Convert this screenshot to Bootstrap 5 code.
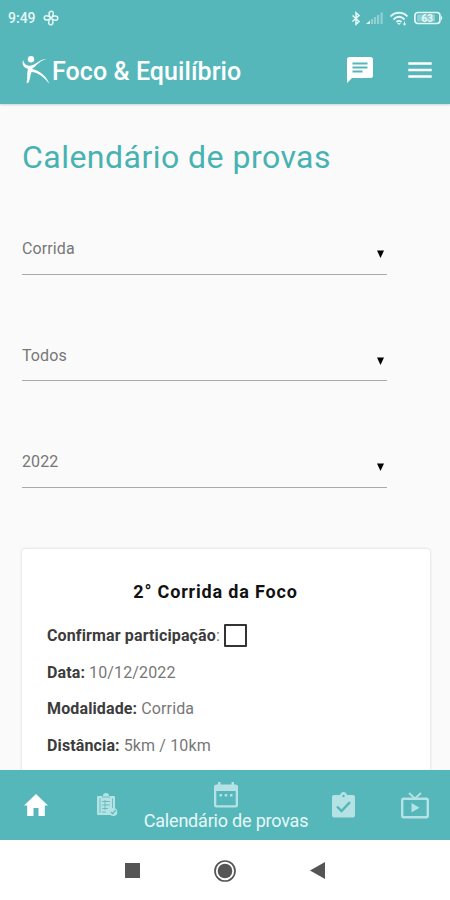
<!DOCTYPE html>
<html lang="pt-BR">
<head>
<meta charset="utf-8">
<meta name="viewport" content="width=device-width, initial-scale=1">
<title>Foco &amp; Equilíbrio</title>
<link href="https://cdn.jsdelivr.net/npm/bootstrap@5.3.0/dist/css/bootstrap.min.css" rel="stylesheet">
<style>
:root { --teal: #56b7ba; }
body { font-family: Roboto, "Liberation Sans", sans-serif; background: #fafafa; color: #777; }
svg { display: block; flex: none; }
.screen { height: 900px; max-width: 450px; }
.teal { background: var(--teal); }
.status-bar { height: 36px; padding: 0 6px 0 8px; color: #e6f8f8; }
.clock { font-size: 14px; font-weight: 500; width: 35px; white-space: nowrap; }
.app-bar { height: 68px; padding: 0 17px 0 22px; }
.app-header { height: 104px; box-shadow: 0 1px 2px rgba(0,60,60,.2); z-index: 1; }
.brand-name { font-size: 25px; font-weight: 500; line-height: 30px; letter-spacing: .07px; padding-top: 3px; }
.menu-icon { margin-left: 34px; }
.content-area { min-height: 0; padding: 32px 20px 0 22px; }
.page-title { font-size: 32px; font-weight: 400; line-height: 42px; letter-spacing: .47px; color: #47b2b2; margin-bottom: 47px; }
.picker { width: 365px; height: 49.500px; border-bottom: 1.5px solid #aaa; margin-bottom: 57px; padding: 12px 3px 0 0; font-size: 16px; line-height: 24px; letter-spacing: .1px; }
.picker svg { margin-top: 13px; }
.event-card { height: 280px; border-radius: 3px; background: #fff; box-shadow: 0 0 3px rgba(0,0,0,.17); padding: 31px 25px; margin: 5px 0 0; }
.picker + .event-card { margin-top: 61px; }
.event-title { font-size: 18px; line-height: 24px; font-weight: 700; letter-spacing: .83px; color: #111; margin: 0 0 14px; padding-right: 21px; }
.event-line { height: 36.7px; font-size: 16px; letter-spacing: .13px; white-space: nowrap; }
.event-line b { color: #3c3c3c; font-weight: 700; }
.tick-box { width: 23px; height: 23px; border: 2px solid #333; border-radius: 1px; margin-left: 4px; }
.tab-bar { height: 70px; }
.tab-side { width: 71px; }
.tab-left { padding-left: 2px; }
.tab-center { padding: 3px 0 0 2px; }
.tab-label { font-size: 18px; line-height: 22px; margin-top: 2px; letter-spacing: -.2px; color: #e6f8f8; white-space: nowrap; }
.tab-dim { color: #b5e2e4; }
.system-bar { height: 60px; color: #555; background: #fff; gap: 73px; padding: 1px 1px 0 0; }
</style>
</head>
<body>
<div class="screen d-flex flex-column overflow-hidden mx-auto">
  <header class="app-header teal flex-shrink-0">
    <div class="status-bar d-flex align-items-center">
      <span class="clock">9:49</span>
      <svg width="16" height="16" viewBox="0 0 16 16" fill="none" stroke="currentColor" stroke-width="1.5">
        <path d="M8 8C4.5 5 6 1.2 8.500 1.200S11 5 8 8C11 4.500 15 6 14.800 8.500S11 11 8 8C11.500 11 10 14.800 7.500 14.800S5 11 8 8C5 11.500 1 10 1.200 7.500S5 5 8 8Z"/>
      </svg>
      <div class="d-flex align-items-center ms-auto">
        <svg width="10" height="15" viewBox="0 0 10 15" fill="none" stroke="currentColor" stroke-width="1.500"><path d="M1.500 4.500L8 10.500 5 13.200V1.800L8 4.500 1.500 10.500"/></svg>
        <svg class="ms-1" width="20" height="14" viewBox="0 0 20 14" fill="currentColor"><path d="M1 13L5 9.500V13Z"/><g opacity=".4"><path d="M6 8h2.200v5H6zM9 6h2.200v7H9zM12 4h2.200v9H12zM15.500 1.500h2.200V13h-2.200z"/></g></svg>
        <svg class="ms-1" width="20" height="15" viewBox="0 0 20 15" fill="none" stroke="currentColor" stroke-width="1.800"><path d="M1.500 5.500C6 .5 14 .5 18.500 5.500M4.500 8.500C8 5 12 5 15.500 8.500M7.500 11C9 9.500 11 9.500 12.500 11"/><path d="M8 12h4l-2 2z" fill="currentColor" stroke="none"/><path d="M15.500 10.500v3.500M13.800 12.500l1.700 1.500 1.700-1.500" stroke-width="1"/></svg>
        <svg class="ms-1" width="31" height="14" viewBox="0 0 31 14"><rect x="1.900" y="1.500" width="25" height="11" rx="3" fill="none" stroke="currentColor" stroke-width="1.700"/><rect x="4" y="3.500" width="18" height="7" rx="1" fill="currentColor" opacity=".4"/><path d="M28 4.500q2.500 2.500 0 5z" fill="currentColor"/><text x="14.300" y="10.700" font-size="10" font-weight="700" text-anchor="middle" fill="currentColor">63</text></svg>
      </div>
    </div>
    <nav class="app-bar d-flex align-items-center text-white">
      <svg width="30" height="30" viewBox="0 0 30 30" fill="currentColor">
        <circle cx="9" cy="4.300" r="3.200"/>
        <path d="M1.300 5C1.500 8.500 4 10.700 8 10.800 14 10 18 3.500 25 4 18.500 5 15 10 10 14 18 15.500 25 22 27.500 29 22 22 16 17.500 9.500 17 8 20 8.500 24 6.500 27.500Q5 29 4.500 27C6 24 4.500 19 6 14 1.500 12.500-.7 9 1.300 5Z"/>
      </svg>
      <span class="brand-name">Foco &amp; Equilíbrio</span>
      <svg class="ms-auto" width="26" height="26" viewBox="0 0 26 26"><path d="M2.500 0h21Q26 0 26 2.500v16q0 2.500-2.500 2.500H5l-5 5V2.500Q0 0 2.500 0Z" fill="currentColor"/><path d="M5.500 6.500h15M5.500 10.500h15M5.500 14.500h10" stroke="#56b7ba" stroke-width="2.200"/></svg>
      <svg class="menu-icon" width="26" height="20" viewBox="0 0 26 20"><path d="M1.300 3.500h23.400M1.300 10h23.400M1.300 16.500h23.400" stroke="currentColor" stroke-width="2.700"/></svg>
    </nav>
  </header>

  <main class="content-area flex-grow-1 overflow-hidden">
    <h1 class="page-title">Calendário de provas</h1>
    <div class="picker d-flex justify-content-between"><span>Corrida</span><svg width="7" height="8" viewBox="0 0 7 8"><path d="M0 .5h7L3.500 8Z" fill="#000"/></svg></div>
    <div class="picker d-flex justify-content-between"><span>Todos</span><svg width="7" height="8" viewBox="0 0 7 8"><path d="M0 .5h7L3.500 8Z" fill="#000"/></svg></div>
    <div class="picker d-flex justify-content-between"><span>2022</span><svg width="7" height="8" viewBox="0 0 7 8"><path d="M0 .5h7L3.500 8Z" fill="#000"/></svg></div>
    <section class="event-card">
      <h2 class="event-title text-center">2° Corrida da Foco</h2>
      <div class="event-line d-flex align-items-center"><b>Confirmar participação</b>:<span class="tick-box"></span></div>
      <div class="event-line d-flex align-items-center gap-1"><b>Data:</b><span>10/12/2022</span></div>
      <div class="event-line d-flex align-items-center gap-1"><b>Modalidade:</b><span>Corrida</span></div>
      <div class="event-line d-flex align-items-center gap-1"><b>Distância:</b><span>5km / 10km</span></div>
    </section>
  </main>

  <nav class="tab-bar teal tab-dim d-flex align-items-center flex-shrink-0">
    <div class="tab-side tab-left d-flex justify-content-center text-white">
      <svg width="24" height="22" viewBox="0 0 24 22"><path d="M12 0L24 11.500H20.800V22H14.500V14H9.500V22H3.200V11.500H0Z" fill="currentColor"/></svg>
    </div>
    <div class="tab-side tab-left d-flex justify-content-center">
      <svg width="21" height="24" viewBox="0 0 21 24"><path d="M1 3h5q0-3 3-3t3 3h5q1 0 1 1v11q-5 1-5 7H1q-1 0-1-1V4Q0 3 1 3Z" fill="currentColor"/><path d="M5 4h8M3 5.500V20M15.500 5.500V15M5 8.500h8M5 12h8M5 15.500h6M5 19h4M8 7v10" stroke="#56b7ba" stroke-width=".8" fill="none"/><circle cx="16.300" cy="19" r="4" fill="currentColor"/><path d="M14 19l1.700 1.600 3-3.400" stroke="#56b7ba" fill="none" stroke-width="1.200"/></svg>
    </div>
    <div class="tab-center flex-grow-1 d-flex flex-column align-items-center">
      <svg width="24" height="26" viewBox="0 0 24 26"><path d="M2.500 2.500H4V0h2.500v2.500h11V0H20v2.500h1.500Q24 2.500 24 5v18q0 2.500-2.500 2.500h-19Q0 25.500 0 23V5Q0 2.500 2.500 2.500ZM2.300 9v14.200h19.400V9Z" fill="currentColor" fill-rule="evenodd"/><path d="M5.500 12H8v2.500H5.500zM10.700 12h2.500v2.500h-2.500zM16 12h2.500v2.500H16z" fill="currentColor"/></svg>
      <span class="tab-label">Calendário de provas</span>
    </div>
    <div class="tab-side d-flex justify-content-center">
      <svg width="23" height="26" viewBox="0 0 23 26"><path d="M2 3h6q1-3 3.500-3T15 3h6q2 0 2 2v18.500q0 2-2 2H2q-2 0-2-2V5Q0 3 2 3Z" fill="currentColor"/><circle cx="11.500" cy="4" r="1.200" fill="#56b7ba"/><path d="M5 14.500l4.500 4.500 8.500-8.800" stroke="#56b7ba" stroke-width="2.400" fill="none"/></svg>
    </div>
    <div class="tab-side d-flex justify-content-center">
      <svg width="28" height="27" viewBox="0 0 28 27" fill="none" stroke="currentColor" stroke-width="2.400"><rect x="1.200" y="6.700" width="25.600" height="18.600" rx="1.500"/><path d="M8 1l6 5.500L20 1" stroke-width="1.800"/><path d="M10.500 11v9.500l8-4.800Z" fill="currentColor" stroke="none"/></svg>
    </div>
  </nav>

  <footer class="system-bar d-flex align-items-center justify-content-center flex-shrink-0">
    <svg width="15" height="15" viewBox="0 0 15 15"><path d="M0 0h15v15H0z" fill="currentColor"/></svg>
    <svg width="24" height="24" viewBox="0 0 24 24"><circle cx="12" cy="12" r="10" fill="none" stroke="currentColor" stroke-width="1.700"/><circle cx="12" cy="12" r="7.300" fill="currentColor"/></svg>
    <svg width="15" height="17" viewBox="0 0 15 17"><path d="M15 0v17L0 8.500Z" fill="currentColor"/></svg>
  </footer>
</div>
<script src="https://cdn.jsdelivr.net/npm/bootstrap@5.3.0/dist/js/bootstrap.bundle.min.js"></script>
</body>
</html>
